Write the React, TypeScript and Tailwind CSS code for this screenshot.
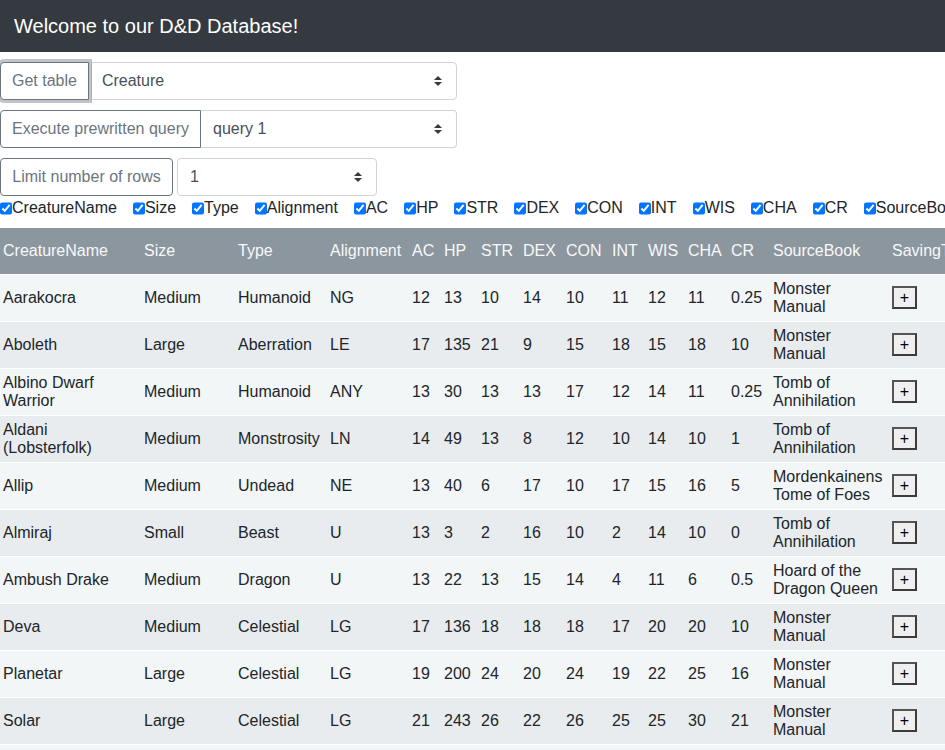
const columns = [
  { name: 'CreatureName', w: 141 },
  { name: 'Size', w: 94 },
  { name: 'Type', w: 92 },
  { name: 'Alignment', w: 82 },
  { name: 'AC', w: 32 },
  { name: 'HP', w: 37 },
  { name: 'STR', w: 42 },
  { name: 'DEX', w: 43 },
  { name: 'CON', w: 46 },
  { name: 'INT', w: 36 },
  { name: 'WIS', w: 40 },
  { name: 'CHA', w: 43 },
  { name: 'CR', w: 42 },
  { name: 'SourceBook', w: 119 },
  { name: 'SavingThrows', w: 121 },
];

const checks = ['CreatureName', 'Size', 'Type', 'Alignment', 'AC', 'HP', 'STR', 'DEX', 'CON', 'INT', 'WIS', 'CHA', 'CR', 'SourceBook', 'SavingThrows'];

const rows = [
  ['Aarakocra', 'Medium', 'Humanoid', 'NG', '12', '13', '10', '14', '10', '11', '12', '11', '0.25', 'Monster Manual'],
  ['Aboleth', 'Large', 'Aberration', 'LE', '17', '135', '21', '9', '15', '18', '15', '18', '10', 'Monster Manual'],
  ['Albino Dwarf Warrior', 'Medium', 'Humanoid', 'ANY', '13', '30', '13', '13', '17', '12', '14', '11', '0.25', 'Tomb of Annihilation'],
  ['Aldani (Lobsterfolk)', 'Medium', 'Monstrosity', 'LN', '14', '49', '13', '8', '12', '10', '14', '10', '1', 'Tomb of Annihilation'],
  ['Allip', 'Medium', 'Undead', 'NE', '13', '40', '6', '17', '10', '17', '15', '16', '5', 'Mordenkainens Tome of Foes'],
  ['Almiraj', 'Small', 'Beast', 'U', '13', '3', '2', '16', '10', '2', '14', '10', '0', 'Tomb of Annihilation'],
  ['Ambush Drake', 'Medium', 'Dragon', 'U', '13', '22', '13', '15', '14', '4', '11', '6', '0.5', 'Hoard of the Dragon Queen'],
  ['Deva', 'Medium', 'Celestial', 'LG', '17', '136', '18', '18', '18', '17', '20', '20', '10', 'Monster Manual'],
  ['Planetar', 'Large', 'Celestial', 'LG', '19', '200', '24', '20', '24', '19', '22', '25', '16', 'Monster Manual'],
  ['Solar', 'Large', 'Celestial', 'LG', '21', '243', '26', '22', '26', '25', '25', '30', '21', 'Monster Manual'],
  ['Androsphinx', 'Large', 'Monstrosity', 'LN', '17', '199', '22', '10', '20', '16', '18', '23', '17', 'Monster Manual'],
];

function SelectArrow() {
  return (
    <svg width="8" height="10" viewBox="0 0 8 10" className="shrink-0">
      <path d="M4 0 L8 4 H0 Z" fill="#343a40" />
      <path d="M4 10 L0 6 H8 Z" fill="#343a40" />
    </svg>
  );
}

export default function App() {
  return (
    <div className="w-[945px] overflow-hidden bg-white font-['Liberation_Sans',Arial,sans-serif] text-[16px] text-[#212529]">
      {/* Navbar */}
      <div className="h-[52px] bg-[#343a40] flex items-center px-[14px]">
        <span className="text-[20px] text-white">Welcome to our D&amp;D Database!</span>
      </div>

      {/* Controls */}
      <div className="flex flex-col gap-[10px] mt-[10px]">
        <div className="flex w-[457px] h-[38px]">
          <button className="h-full px-[11px] border border-[#6c757d] rounded-l-[4px] text-[#6c757d] bg-white shadow-[0_0_0_3px_rgba(130,138,145,0.5)] relative z-10">
            Get table
          </button>
          <div className="flex-1 ml-[2px] h-full border border-[#ced4da] rounded-r-[4px] flex items-center justify-between pl-[10px] pr-[14px] text-[#495057]">
            <span>Creature</span>
            <SelectArrow />
          </div>
        </div>

        <div className="flex w-[457px] h-[38px]">
          <button className="h-full px-[11px] border border-[#6c757d] rounded-l-[4px] text-[#6c757d] bg-white">
            Execute prewritten query
          </button>
          <div className="flex-1 h-full border border-l-0 border-[#ced4da] rounded-r-[4px] flex items-center justify-between pl-[12px] pr-[14px] text-[#495057]">
            <span>query 1</span>
            <SelectArrow />
          </div>
        </div>

        <div className="flex h-[38px] gap-[4px]">
          <button className="h-full w-[173px] border border-[#6c757d] rounded-[4px] text-[#6c757d] bg-white">
            Limit number of rows
          </button>
          <div className="w-[200px] h-full border border-[#ced4da] rounded-[4px] flex items-center justify-between pl-[12px] pr-[14px] text-[#495057]">
            <span>1</span>
            <SelectArrow />
          </div>
        </div>
      </div>

      {/* Column toggles */}
      <div className="flex whitespace-nowrap mt-[1px] h-[22px] items-center">
        {checks.map((c) => (
          <label key={c} className="flex items-center mr-[16px] shrink-0">
            <input type="checkbox" defaultChecked className="m-0 w-[12px] h-[13px] accent-[#0075ff]" />
            <span>{c}</span>
          </label>
        ))}
      </div>

      {/* Table */}
      <table className="table-fixed w-[1010px] mt-[9px] border-collapse">
        <colgroup>
          {columns.map((c) => (
            <col key={c.name} style={{ width: c.w }} />
          ))}
        </colgroup>
        <thead>
          <tr className="bg-[#8c969e] h-[46px]">
            {columns.map((c) => (
              <th key={c.name} className="text-left font-normal text-[#f8f9fa] px-[3px] whitespace-nowrap overflow-hidden">
                {c.name}
              </th>
            ))}
          </tr>
        </thead>
        <tbody>
          {rows.map((r, i) => (
            <tr key={r[0]} className={`h-[47px] border-t border-white ${i % 2 === 0 ? 'bg-[#f2f6f7]' : 'bg-[#e8ecef]'}`}>
              {r.map((v, j) => (
                <td key={j} className="px-[3px] leading-[18px] align-middle">
                  {v}
                </td>
              ))}
              <td className="px-[3px] align-middle">
                <button className="w-[25px] h-[23px] bg-[#efefef] border-2 border-[#3c3c3c] border-t-[#555] border-l-[#555] flex items-center justify-center text-[16px] leading-none text-black">
                  +
                </button>
              </td>
            </tr>
          ))}
        </tbody>
      </table>
    </div>
  );
}
